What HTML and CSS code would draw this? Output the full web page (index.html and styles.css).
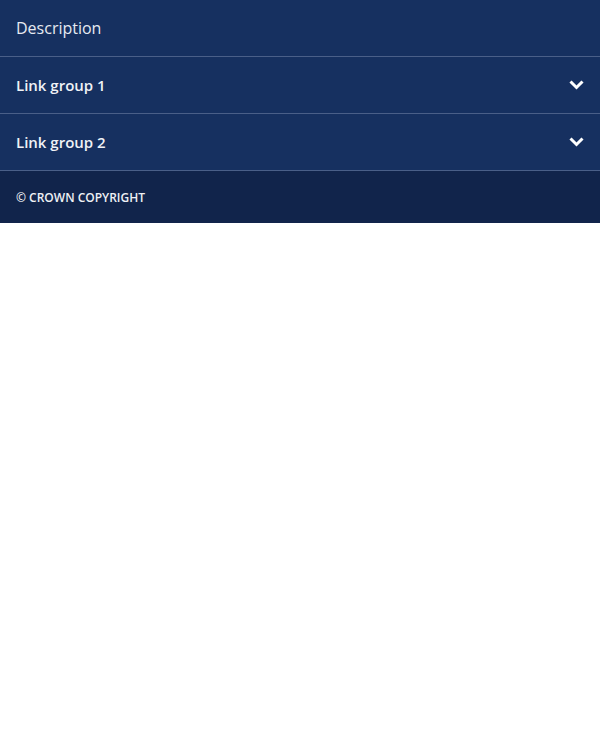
FILE: index.html
```html
<!DOCTYPE html>
<html lang="en">
<head>
<meta charset="utf-8">
<link rel="stylesheet" href="styles.css">
</head>
<body>
<footer class="footer">
  <div class="desc">Description</div>
  <div class="group">
    <span class="group-title">Link group 1</span>
    <svg class="chev" width="15" height="10" viewBox="0 0 15 10"><path d="M1.5 1.5 L7.5 7.5 L13.5 1.5" fill="none" stroke="#fff" stroke-width="3"/></svg>
  </div>
  <div class="group">
    <span class="group-title">Link group 2</span>
    <svg class="chev" width="15" height="10" viewBox="0 0 15 10"><path d="M1.5 1.5 L7.5 7.5 L13.5 1.5" fill="none" stroke="#fff" stroke-width="3"/></svg>
  </div>
  <div class="copy">© CROWN COPYRIGHT</div>
</footer>
</body>
</html>
```
FILE: styles.css
```css
html, body { margin: 0; padding: 0; background: #fff; }
.footer { font-family: "Open Sans", sans-serif; color: #e6eaf1; }
.desc {
  background: #163060;
  height: 56px;
  display: flex;
  align-items: center;
  padding: 0 16px;
  font-size: 16px;
  border-bottom: 1px solid #4a5f88;
}
.group {
  background: #163060;
  height: 56px;
  display: flex;
  align-items: center;
  justify-content: space-between;
  padding: 0 16px;
  border-bottom: 1px solid #4a5f88;
}
.group-title { font-size: 15px; font-weight: 600; color: #f0f2f6; margin-top: -1px; }
.chev { display: block; }
.copy {
  background: #11244b;
  height: 52px;
  display: flex;
  align-items: center;
  padding: 0 16px;
  font-size: 12px;
  font-weight: 600;
  color: #eef0f4;
}
```
